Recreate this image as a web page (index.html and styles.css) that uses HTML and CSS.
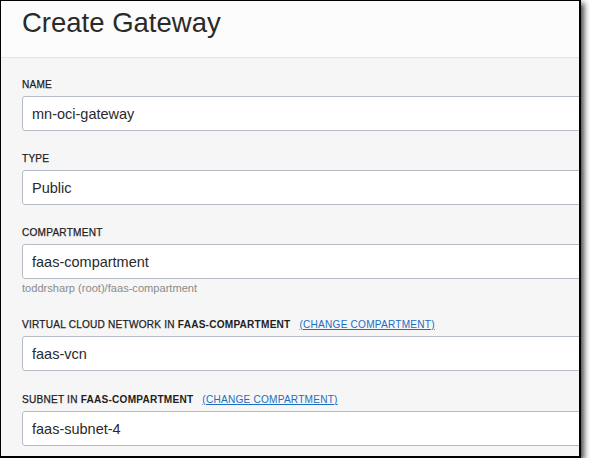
FILE: index.html
```html
<!DOCTYPE html>
<html lang="en">
<head>
<meta charset="utf-8">
<title>Create Gateway</title>
<link rel="stylesheet" href="styles.css">
</head>
<body>
<div class="frame">
  <header class="header">
    <h1 class="title">Create Gateway</h1>
  </header>
  <main class="form">
    <div class="field">
      <div class="label">NAME</div>
      <div class="input">mn-oci-gateway</div>
    </div>
    <div class="field">
      <div class="label">TYPE</div>
      <div class="input">Public</div>
    </div>
    <div class="field">
      <div class="label">COMPARTMENT</div>
      <div class="input">faas-compartment</div>
      <div class="help">toddrsharp (root)/faas-compartment</div>
    </div>
    <div class="field">
      <div class="label">VIRTUAL CLOUD NETWORK IN <strong>FAAS-COMPARTMENT</strong><a class="link" href="#">(CHANGE COMPARTMENT)</a></div>
      <div class="input">faas-vcn</div>
    </div>
    <div class="field field-last">
      <div class="label">SUBNET IN <strong>FAAS-COMPARTMENT</strong><a class="link" href="#">(CHANGE COMPARTMENT)</a></div>
      <div class="input">faas-subnet-4</div>
    </div>
  </main>
</div>
</body>
</html>
```

FILE: styles.css
```css
html, body {
  margin: 0;
  padding: 0;
  background: #ffffff;
}

.frame {
  width: 578px;
  height: 455px;
  border-top: 1px solid #000;
  border-left: 1px solid #000;
  border-right: 2px solid #000;
  border-bottom: 2px solid #000;
  background: #f6f6f6;
  overflow: hidden;
  box-shadow: 3px 3px 6px rgba(0, 0, 0, 0.75);
  font-family: "Liberation Sans", Arial, Helvetica, sans-serif;
}

.header {
  background: #fcfcfc;
  border-bottom: 1px solid #e3e3e3;
  padding: 6px 21px 18px;
}

.title {
  margin: 0;
  font-size: 27.5px;
  line-height: 32px;
  font-weight: normal;
  color: #2a2a2a;
}

.form {
  padding: 20px 0 0 21px;
  display: flex;
  flex-direction: column;
  gap: 21px;
}

.field {
  display: flex;
  flex-direction: column;
}

.field-last {
  margin-top: 1px;
}

.label {
  font-size: 10.1px;
  line-height: 14px;
  letter-spacing: 0.22px;
  color: #1e1e1e;
  -webkit-text-stroke: 0.25px #1e1e1e;
  margin-bottom: 4px;
  white-space: nowrap;
}

.label strong {
  font-weight: bold;
  -webkit-text-stroke: 0;
}

.link {
  margin-left: 9px;
  color: #1b6ec2;
  -webkit-text-stroke: 0;
  letter-spacing: 0.22px;
  text-decoration: underline;
}

.input {
  box-sizing: border-box;
  width: 620px;
  height: 35px;
  background: #ffffff;
  border: 1px solid #b6bcc6;
  border-radius: 3px;
  padding: 1px 9px 0;
  font-size: 14.5px;
  line-height: 33px;
  color: #2a2a2a;
}

.help {
  margin: 2px 0;
  font-size: 11.1px;
  line-height: 14px;
  color: #8a8a8a;
}
```
